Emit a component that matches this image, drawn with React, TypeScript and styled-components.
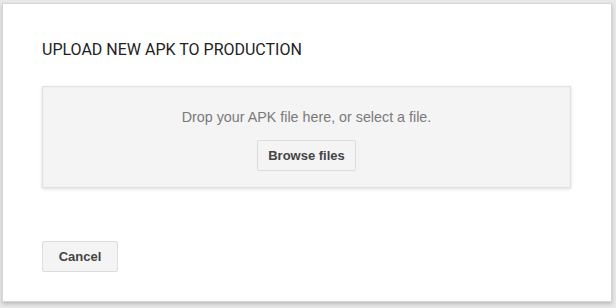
import React from 'react';
import styled, { createGlobalStyle } from 'styled-components';

const Global = createGlobalStyle`
    html, body {
        margin: 0;
        padding: 0;
        background: #e9e9e9;
    }
    body {
        width: 616px;
        height: 308px;
        overflow: hidden;
    }
`;

const Page = styled.div`
    width: 616px;
    height: 308px;
    padding: 3px 4px 6px 2px;
    box-sizing: border-box;
`;

const Dialog = styled.div`
    display: flex;
    flex-direction: column;
    width: 610px;
    height: 299px;
    box-sizing: border-box;
    background: #fff;
    border: 1px solid #d6d6d6;
    box-shadow: 0 2px 4px rgba(0, 0, 0, 0.2);
    padding: 36px 40px 0 39px;
`;

const Title = styled.h2`
    margin: 0;
    font-family: Roboto, "Liberation Sans", sans-serif;
    font-weight: 400;
    font-size: 16px;
    line-height: 20px;
    color: #222;
`;

const DropZone = styled.div`
    display: flex;
    flex-direction: column;
    align-items: center;
    margin-top: 26px;
    height: 102px;
    box-sizing: border-box;
    padding-top: 21px;
    background: #f4f4f4;
    border: 1px solid #e2e2e2;
    box-shadow: 0 1px 3px rgba(0, 0, 0, 0.15), inset 0 0 2px rgba(0, 0, 0, 0.05);
`;

const Hint = styled.p`
    margin: 0;
    font-family: "Liberation Sans", Arial, sans-serif;
    font-size: 14.3px;
    line-height: 18px;
    color: #7a7a7a;
`;

const Button = styled.button<{ $top?: number; $width?: number }>`
    margin-top: ${({ $top }) => $top ?? 0}px;
    width: ${({ $width }) => ($width ? `${$width}px` : 'auto')};
    height: 31px;
    padding: 0 10px;
    box-sizing: border-box;
    background: #f4f4f4;
    border: 1px solid #dcdcdc;
    border-radius: 2px;
    font-family: "Liberation Sans", Arial, sans-serif;
    font-weight: 700;
    font-size: 13px;
    color: #444;
    cursor: pointer;
`;

const Footer = styled.div`
    display: flex;
    margin-top: 53px;
`;

const App: React.FC = () => {
    return (
        <>
            <Global />
            <Page>
                <Dialog>
                    <Title>UPLOAD NEW APK TO PRODUCTION</Title>
                    <DropZone>
                        <Hint>Drop your APK file here, or select a file.</Hint>
                        <Button $top={14}>Browse files</Button>
                    </DropZone>
                    <Footer>
                        <Button $width={76}>Cancel</Button>
                    </Footer>
                </Dialog>
            </Page>
        </>
    );
};

export default App;
